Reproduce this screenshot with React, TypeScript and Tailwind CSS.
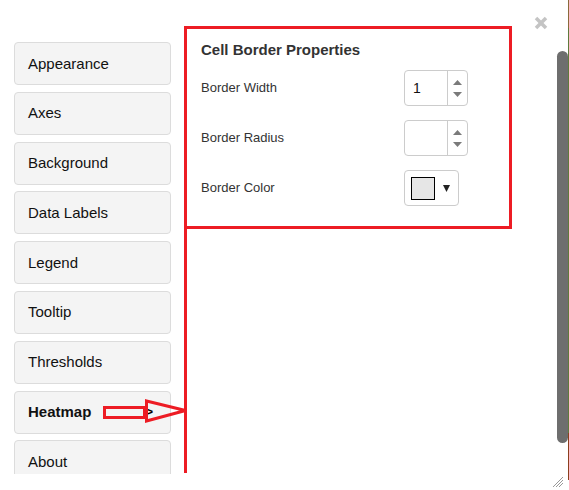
import React from "react";

const items = [
  "Appearance",
  "Axes",
  "Background",
  "Data Labels",
  "Legend",
  "Tooltip",
  "Thresholds",
  "Heatmap",
  "About",
];

function Spinner({ value }: { value: string }) {
  return (
    <div className="flex h-[36px] w-[64px] rounded-[4px] border border-[#cccccc] bg-white">
      <div className="flex w-[42px] items-center pl-[8px] text-[14px] text-[#111]">{value}</div>
      <div className="flex flex-1 flex-col items-center justify-center gap-[7px] border-l border-[#cccccc]">
        <svg width="9" height="5" viewBox="0 0 9 5">
          <polygon points="0,5 4.5,0 9,5" fill="#7a7a7a" />
        </svg>
        <svg width="9" height="5" viewBox="0 0 9 5">
          <polygon points="0,0 9,0 4.5,5" fill="#7a7a7a" />
        </svg>
      </div>
    </div>
  );
}

export default function App() {
  return (
    <div
      className="relative h-[490px] w-[569px] overflow-hidden bg-white"
      style={{ fontFamily: '"Liberation Sans", Arial, sans-serif' }}
    >
      <div className="flex h-[474px] overflow-hidden">
        {/* Sidebar */}
        <div className="flex w-[171px] shrink-0 flex-col gap-[6.8px] pl-[14px] pt-[42px]">
          {items.map((it) => {
            const active = it === "Heatmap";
            return (
              <div
                key={it}
                className="flex h-[43px] w-[157px] shrink-0 items-center justify-between rounded-[4px] border border-[#dcdcdc] bg-[#f4f4f4] pl-[13px] pr-[17px] text-[15px] leading-[20px] text-[#111]"
              >
                <span className={active ? "font-bold" : ""}>{it}</span>
                {active && <span className="text-[13px] font-bold text-black">&gt;</span>}
              </div>
            );
          })}
        </div>

        {/* Content */}
        <div className="ml-[30px] flex flex-col pt-[40px]">
          <div className="h-[20px] text-[15px] font-bold leading-[20px] text-[#333]">
            Cell Border Properties
          </div>
          <div className="mt-[10px] flex flex-col gap-[14px]">
            <div className="flex h-[36px] items-center">
              <div className="w-[203px] text-[13px] text-[#333]">Border Width</div>
              <Spinner value="1" />
            </div>
            <div className="flex h-[36px] items-center">
              <div className="w-[203px] text-[13px] text-[#333]">Border Radius</div>
              <Spinner value="" />
            </div>
            <div className="flex h-[36px] items-center">
              <div className="w-[203px] text-[13px] text-[#333]">Border Color</div>
              <div className="flex h-[36px] w-[55px] items-center rounded-[4px] border border-[#cccccc] bg-white pl-[6px]">
                <div className="h-[23px] w-[24px] border border-black bg-[#e6e6e6]" />
                <svg className="ml-[8px]" width="7" height="7" viewBox="0 0 7 7">
                  <polygon points="0,0 7,0 3.5,7" fill="#222" />
                </svg>
              </div>
            </div>
          </div>
        </div>

        <div className="flex-1" />

        {/* Scrollbar */}
        <div className="flex w-[12px] shrink-0 flex-col">
          <div className="mt-[51px] h-[392px] w-[11px] rounded-full bg-[#6e6e6e]" />
        </div>
      </div>

      {/* right edge line */}
      <div className="absolute right-0 top-0 flex h-[490px] w-[1px] flex-col">
        <div className="h-[28px] bg-[#8a6a3a]" />
        <div className="h-[405px] bg-[#5f7a3c]" />
        <div className="h-[47px] bg-[#8b3f1e]" />
      </div>

      {/* Close button */}
      <svg className="absolute left-[534px] top-[16px]" width="14" height="14" viewBox="0 0 14 14">
        <line x1="2" y1="2" x2="12" y2="12" stroke="#c4c4c4" strokeWidth="3.5" />
        <line x1="12" y1="2" x2="2" y2="12" stroke="#c4c4c4" strokeWidth="3.5" />
      </svg>

      {/* Resize grip */}
      <svg className="absolute left-[552px] top-[476px]" width="12" height="12" viewBox="0 0 12 12">
        <line x1="11" y1="1" x2="1" y2="11" stroke="#999" strokeWidth="1" />
        <line x1="11" y1="4" x2="4" y2="11" stroke="#999" strokeWidth="1" />
        <line x1="11" y1="7" x2="7" y2="11" stroke="#999" strokeWidth="1" />
      </svg>

      {/* Red annotation box */}
      <div className="pointer-events-none absolute left-[184px] top-[26px] h-[203px] w-[328px] border-[3px] border-[#ed1c24]" />
      <div className="pointer-events-none absolute left-[184px] top-[229px] h-[244px] w-[3px] bg-[#ed1c24]" />

      {/* Red arrow */}
      <svg
        className="pointer-events-none absolute left-[100px] top-[396px]"
        width="92"
        height="30"
        viewBox="100 396 92 30"
      >
        <rect x="104.5" y="407.5" width="40" height="10" fill="none" stroke="#ed1c24" strokeWidth="3" />
        <polygon points="146.5,401 185.5,410.5 146.5,421" fill="none" stroke="#ed1c24" strokeWidth="3" strokeLinejoin="miter" />
      </svg>
    </div>
  );
}
